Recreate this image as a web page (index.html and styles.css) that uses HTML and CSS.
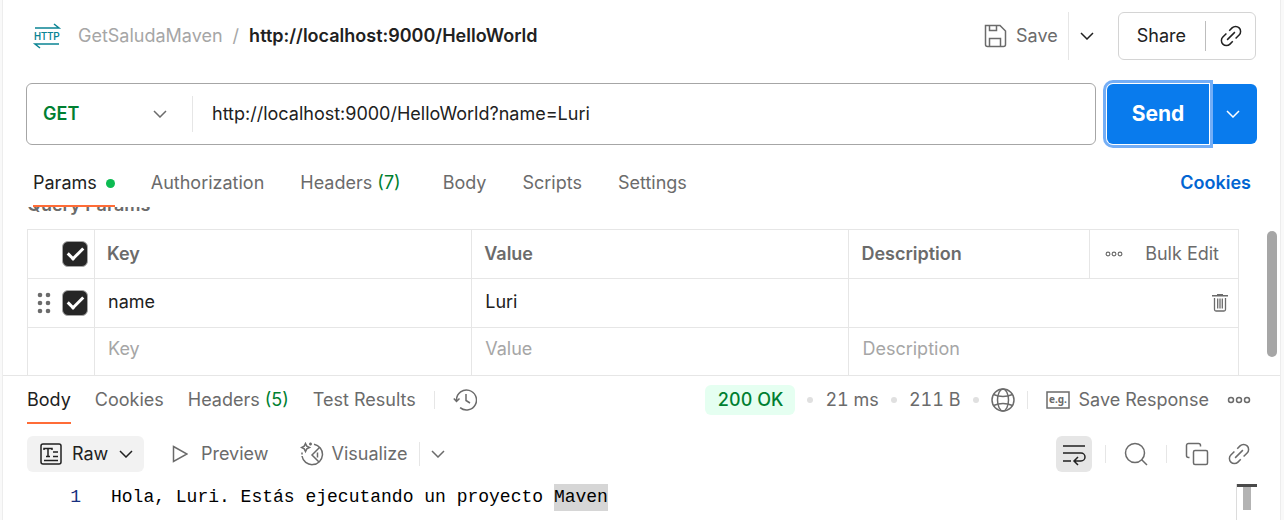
FILE: index.html
```
<!DOCTYPE html>
<html lang="en">
<head>
<meta charset="utf-8">
<title>http://localhost:9000/HelloWorld</title>
<link rel="stylesheet" href="styles.css">
</head>
<body>
<svg class="defs" aria-hidden="true">
  <symbol id="chevron" viewBox="0 0 14 8"><path d="M1 1l6 6 6-6"/></symbol>
  <symbol id="link" viewBox="0 0 24 24"><g transform="rotate(-45 12 12)"><path d="M14.500 7h4a5 5 0 0 1 0 10h-5M10.500 7h-5a5 5 0 0 0 0 10h4M6.500 12h11"/></g></symbol>
  <symbol id="more" viewBox="0 0 24 8"><circle cx="4" cy="4" r="2.500"/><circle cx="12" cy="4" r="2.500"/><circle cx="20" cy="4" r="2.500"/></symbol>
</svg>
<main class="pane">
  <header class="title-bar">
    <svg class="http-logo" viewBox="0 0 26 26" aria-hidden="true">
      <path d="M1 5h24l-5-4M25 21H1l5 4"/>
      <text x="0" y="17">HTTP</text>
    </svg>
    <nav class="crumbs"><a href="#collection">GetSaludaMaven</a><span class="slash">/</span><strong>http://localhost:9000/HelloWorld</strong></nav>
    <button class="save" type="button">
      <svg class="icon" viewBox="0 0 24 24"><path d="M2.500 1.500H17l5.500 5.500v13.500q0 2-2 2h-16q-2 0-2-2zM6.500 1.500v5h7v-5M6.500 22.500v-8h11v8"/></svg>Save
    </button>
    <button class="save-more" type="button" aria-label="More save options"><svg class="chevron"><use href="#chevron"/></svg></button>
    <div class="share">
      <button class="share-text" type="button">Share</button>
      <button class="share-link" type="button" aria-label="Copy link"><svg class="icon"><use href="#link"/></svg></button>
    </div>
  </header>

  <form class="request" onsubmit="return false">
    <div class="url-box">
      <div class="method">
        <select aria-label="Method"><option>GET</option><option>POST</option><option>PUT</option></select>
        <svg class="chevron"><use href="#chevron"/></svg>
      </div>
      <input class="url" type="text" aria-label="Request URL" value="http://localhost:9000/HelloWorld?name=Luri">
    </div>
    <div class="send-group">
      <button class="send" type="submit">Send</button>
      <button class="send-more" type="button" aria-label="More send options"><svg class="chevron"><use href="#chevron"/></svg></button>
    </div>
  </form>

  <nav class="request-tabs">
    <button class="tab active" type="button">Params<span class="dot"></span></button>
    <button class="tab" type="button">Authorization</button>
    <button class="tab" type="button">Headers <span class="count">(7)</span></button>
    <button class="tab" type="button">Body</button>
    <button class="tab" type="button">Scripts</button>
    <button class="tab" type="button">Settings</button>
    <a class="cookies" href="#cookies">Cookies</a>
  </nav>

  <section class="params">
    <div class="params-body">
      <h2>Query Params</h2>
      <table>
        <colgroup><col class="c-check"><col class="c-text"><col class="c-text"><col><col class="c-actions"></colgroup>
        <thead>
          <tr>
            <th><input class="check" type="checkbox" checked aria-label="Select all"></th>
            <th>Key</th><th>Value</th><th>Description</th>
            <th><div class="actions"><button type="button" aria-label="More"><svg class="more small"><use href="#more"/></svg></button><button class="bulk" type="button">Bulk Edit</button></div></th>
          </tr>
        </thead>
        <tbody>
          <tr>
            <td><div class="handle"><svg class="grip" viewBox="0 0 14 22"><circle cx="3" cy="3" r="2.300"/><circle cx="11" cy="3" r="2.300"/><circle cx="3" cy="11" r="2.300"/><circle cx="11" cy="11" r="2.300"/><circle cx="3" cy="19" r="2.300"/><circle cx="11" cy="19" r="2.300"/></svg><input class="check" type="checkbox" checked aria-label="Use name"></div></td>
            <td><input type="text" aria-label="Key" value="name"></td>
            <td><input type="text" aria-label="Value" value="Luri"></td>
            <td colspan="2"><div class="desc"><input type="text" aria-label="Description"><button type="button" aria-label="Delete"><svg class="trash" viewBox="0 0 16 18"><path class="fill" d="M0 1h5V0h6v1h5v1.500H0z"/><path d="M2.500 4v11.500q0 1.500 1.500 1.500h8q1.500 0 1.500-1.500V4M5.700 4.500v10M8 4.500v10M10.300 4.500v10"/></svg></button></div></td>
          </tr>
          <tr class="blank">
            <td></td>
            <td><input type="text" aria-label="New key" placeholder="Key"></td>
            <td><input type="text" aria-label="New value" placeholder="Value"></td>
            <td colspan="2"><input type="text" aria-label="New description" placeholder="Description"></td>
          </tr>
        </tbody>
      </table>
    </div>
    <div class="scroll-track"><div class="scroll-thumb"></div></div>
  </section>

  <section class="response">
    <div class="response-bar">
      <nav class="response-tabs">
        <button class="tab active" type="button">Body</button>
        <button class="tab" type="button">Cookies</button>
        <button class="tab" type="button">Headers <span class="count">(5)</span></button>
        <button class="tab" type="button">Test Results</button>
      </nav>
      <span class="rule"></span>
      <button class="history" type="button" aria-label="History"><svg class="icon" viewBox="0 0 24 24"><path d="M3.500 13V11.500a10 10 0 1 1 3.600 8.200M.8 10.500l2.700 3 3-3M13 6v6.500l4 2.500"/></svg></button>
      <div class="stats">
        <span class="status">200 OK</span><i></i><span>21 ms</span><i></i><span>211 B</span><i></i>
        <svg class="icon" viewBox="0 0 24 24"><circle cx="12" cy="12" r="11"/><ellipse cx="12" cy="12" rx="5.500" ry="11"/><path d="M2.500 6.500q9.500 4 19 0M2.500 17.500q9.500-4 19 0"/></svg>
      </div>
      <span class="rule"></span>
      <button class="save-response" type="button"><svg class="example" viewBox="0 0 24 18"><rect x="1" y="1" width="22" height="16"/><text x="3" y="12">e.g.</text></svg>Save Response</button>
      <button type="button" aria-label="More"><svg class="more"><use href="#more"/></svg></button>
    </div>

    <div class="view-bar">
      <button class="raw" type="button"><svg class="icon" viewBox="0 0 24 24"><rect x="2" y="2" width="20" height="20" rx="2"/><path d="M5 8V6.500h8V8M9 6.500v8M7 14.500h4M14 10h5M14 14.500h5M5 18.500h14"/></svg>Raw<svg class="chevron"><use href="#chevron"/></svg></button>
      <button class="preview" type="button"><svg class="play" viewBox="0 0 16 18"><path d="M1.500 1.500L15 9 1.500 16.500z"/></svg>Preview</button>
      <button class="visualize" type="button"><svg class="icon" viewBox="0 0 24 24"><path d="M14 2.200a10.300 10.300 0 1 1-12 11.800M19.500 5.500L12 13l7.500 7.500M17.500 10.500v5M5.500 1.500l1.300 2.700L9.500 5.500 6.800 6.800 5.500 9.500 4.200 6.800 1.500 5.500l2.700-1.300zM10.500 .5v3M9 2h3M2 10.500v2"/></svg>Visualize</button>
      <button class="view-more" type="button" aria-label="More views"><svg class="chevron"><use href="#chevron"/></svg></button>
      <div class="tools">
        <button class="wrap" type="button" aria-label="Wrap lines"><svg class="icon" viewBox="0 0 24 24"><path d="M1 4h22M1 11h18a4 4 0 0 1 0 8h-6M16 15l-4 4 4 4M1 19h8"/></svg></button>
        <span class="rule"></span>
        <button type="button" aria-label="Search"><svg class="icon" viewBox="0 0 24 24"><circle cx="11" cy="11" r="9.500"/><path d="M17.500 17.500l5.500 5.500"/></svg></button>
        <span class="rule"></span>
        <button class="copy" type="button" aria-label="Copy"><svg class="icon" viewBox="0 0 24 24"><rect x="8.500" y="8.500" width="14" height="14" rx="1.500"/><path d="M4.500 15.500H3.500a2 2 0 0 1-2-2v-10a2 2 0 0 1 2-2h10a2 2 0 0 1 2 2v1"/></svg></button>
        <button type="button" aria-label="Copy link"><svg class="icon"><use href="#link"/></svg></button>
      </div>
    </div>

    <div class="editor">
      <span class="line-number">1</span>
      <code>Hola, Luri. Estás ejecutando un proyecto <mark>Maven</mark></code>
      <div class="minimap"><div class="viewport"></div><div class="thumb"></div></div>
    </div>
  </section>
</main>
</body>
</html>
```

FILE: styles.css
```
*, ::after { box-sizing: border-box; }
body {
  margin: 0;
  padding: 0 3px 0 2px;
  height: 100vh;
  overflow: hidden;
  background: #f9f9f9;
  color: #212121;
  font: 18px/24px Inter, "Liberation Sans", sans-serif;
}
button, input, select { font: inherit; color: inherit; border: 0; background: none; padding: 0; margin: 0; }
button { display: flex; align-items: center; color: #6b6b6b; white-space: nowrap; }
a { text-decoration: none; }
svg { display: block; flex: none; fill: none; stroke: currentColor; stroke-width: 1.5; }
.defs { position: absolute; width: 0; height: 0; }
.icon { width: 24px; height: 24px; }
.chevron { width: 14px; height: 8px; }
.more { width: 24px; height: 8px; }
.more.small { width: 18px; height: 6px; }
.rule { width: 1px; height: 18px; background: #e6e6e6; flex: none; }

.pane {
  display: flex;
  flex-direction: column;
  height: 100%;
  background: #fff;
  border: solid #ededed;
  border-width: 0 1px;
}

.title-bar { display: flex; align-items: center; height: 72px; padding: 0 24px 0 31px; flex: none; }
.http-logo { width: 26px; height: 26px; color: #0b8494; margin-right: 18px; overflow: visible; }
.http-logo text { font: 500 10px Roboto, sans-serif; fill: currentColor; stroke: none; }
.crumbs { flex: 1; color: #212121; white-space: nowrap; }
.crumbs a { color: #a6a6a6; }
.crumbs strong { font-weight: 600; }
.slash { color: #a6a6a6; margin: 0 10px; }
.save { gap: 9px; padding-right: 10px; }
.save-more { height: 48px; width: 50px; padding-left: 11px; border-left: 1px solid #e6e6e6; color: #212121; }
.share { display: flex; align-items: center; height: 48px; border: 1px solid #d4d4d4; border-radius: 6px; }
.share button { color: #212121; }
.share-text { padding: 0 19px 0 18px; }
.share .share-link { height: 30px; padding: 0 12px 0 13px; border-left: 1px solid #bdbdbd; }

.request { display: flex; gap: 11px; margin: 11px 23px 0; flex: none; }
.url-box { display: flex; align-items: center; flex: 1; height: 62px; border: 1px solid #a6a6a6; border-radius: 6px; }
.method { display: flex; align-items: center; width: 166px; height: 36px; border-right: 1px solid #e6e6e6; color: #6b6b6b; }
.method select { flex: 1; width: 100%; height: 36px; padding-left: 16px; appearance: none; color: #007f31; font-weight: 600; outline: 0; }
.method .chevron { margin-right: 25px; }
.url { flex: 1; height: 36px; padding: 0 0 2px 19px; outline: 0; }
.send-group { display: flex; align-items: center; }
.send { position: relative; justify-content: center; width: 102px; height: 60px; border-radius: 6px 0 0 6px; background: #097bed; color: #fff; font-size: 21px; font-weight: 700; box-shadow: 0 0 0 1px #fff, 0 0 0 4px #74aef6; }
.send-more { justify-content: center; width: 48px; height: 60px; background: #097bed; color: #fff; border-radius: 0 6px 6px 0; }

.request-tabs { display: flex; align-items: center; height: 62px; padding: 14px 29px 0 30px; gap: 36px; flex: none; }
.tab { height: 48px; border: solid transparent; border-width: 2px 0; white-space: pre; }
.tab.active { color: #212121; border-bottom-color: #ff6c37; }
.count { color: #007f31; }
.request-tabs .count { margin-right: 6px; }
.dot { width: 9px; height: 9px; margin-left: 9px; border-radius: 50%; background: #0cbb52; }
.cookies { margin-left: auto; color: #0265d2; font-weight: 600; }

.params { display: flex; height: 169px; flex: none; border-bottom: 1px solid #e6e6e6; overflow: hidden; }
.params-body { flex: 1; margin-left: 24px; }
.params h2 { margin: -14px 0 12px; font-size: 18px; line-height: 24px; font-weight: 600; color: #6b6b6b; }
.scroll-track { width: 41px; padding: 24px 3px 18px 28px; }
.scroll-thumb { height: 126px; border-radius: 5px; background: #a6a6a6; }
table { width: 100%; table-layout: fixed; border-collapse: collapse; }
.c-check { width: 67px; }
.c-text { width: 31.15%; }
.c-actions { width: 149px; }
th, td { height: 49px; padding: 0 12px; border: 1px solid #e6e6e6; text-align: left; }
th { color: #6b6b6b; font-weight: 600; }
td { padding: 0 14px 0 13px; }
th:first-child, td:first-child { padding: 0 6px 0 9px; }
td input[type="text"] { display: block; width: 100%; height: 24px; padding-bottom: 2px; outline: 0; }
td input::placeholder { color: #a6a6a6; opacity: 1; }
.blank td { padding-bottom: 4px; }
.check { display: block; appearance: none; width: 26px; height: 26px; margin-left: auto; border-radius: 6px; background: #262626; border: 1px solid #a6a6a6; }
.check:checked::after { content: ""; display: block; width: 9px; height: 16px; margin: 2px 0 0 8px; border: solid #fff; border-width: 0 3px 3px 0; transform: rotate(45deg); }
.handle, .desc, .actions { display: flex; align-items: center; }
.grip { width: 14px; height: 22px; fill: #6b6b6b; stroke: none; }
.trash { width: 16px; height: 18px; stroke-width: 1.3; }
.trash .fill { fill: currentColor; stroke: none; }
.desc { margin-right: -4px; }
.actions { justify-content: space-between; margin: 0 7px 0 3px; }
.bulk { font-weight: 400; }

.response { display: flex; flex-direction: column; flex: 1; }
.response-bar { display: flex; align-items: center; height: 48px; padding: 0 29px 0 24px; flex: none; }
.response-bar > .rule:nth-of-type(1) { margin-left: 18px; }
.response-tabs { display: flex; gap: 24px; }
.history { margin-left: 18px; }
.stats { display: flex; align-items: center; gap: 12px; margin: 0 12px 0 auto; color: #6b6b6b; font-variant-numeric: tabular-nums; }
.stats i { width: 6px; height: 6px; border-radius: 50%; background: #e0e0e0; }
.status { padding: 3px 12px; border-radius: 6px; background: #e5fff1; color: #007f31; font-weight: 500; }
.save-response { gap: 9px; margin: 0 18px; }
.example { width: 24px; height: 18px; }
.example text { font: 700 10px "Noto Sans", sans-serif; fill: currentColor; stroke: none; }

.view-bar { display: flex; align-items: center; height: 60px; padding: 0 29px 0 24px; flex: none; }
.view-bar button { height: 36px; }
.view-bar .raw { gap: 9px; width: 117px; padding: 0 11px 0 12px; border-radius: 6px; background: #f2f2f2; color: #212121; }
.raw .chevron { margin-left: auto; }
.preview { gap: 13px; margin-left: 28px; }
.play { width: 16px; height: 18px; }
.visualize { gap: 8px; margin-left: 31px; padding-right: 12px; }
.view-bar .view-more { height: 24px; padding-left: 11px; border-left: 1px solid #e6e6e6; }
.tools { display: flex; align-items: center; gap: 18px; margin-left: auto; }
.tools .wrap { justify-content: center; width: 36px; margin-right: -5px; border-radius: 6px; background: #e6e6e6; color: #212121; }

.editor { display: flex; flex: 1; line-height: 27px; font-family: "Liberation Mono", monospace; color: #000; }
.line-number { width: 78px; text-align: right; color: #17307f; }
.editor code { flex: 1; padding-left: 30px; font: inherit; white-space: pre; }
.editor mark { display: inline-block; background: #d6d6d6; color: inherit; }
.minimap { width: 44px; border-left: 1px solid #dcdcdc; }
.viewport { width: 20px; height: 3px; background: #4a4a4a; }
.thumb { width: 8px; height: 23px; margin-left: 6px; background: #b3b3b3; }
```
